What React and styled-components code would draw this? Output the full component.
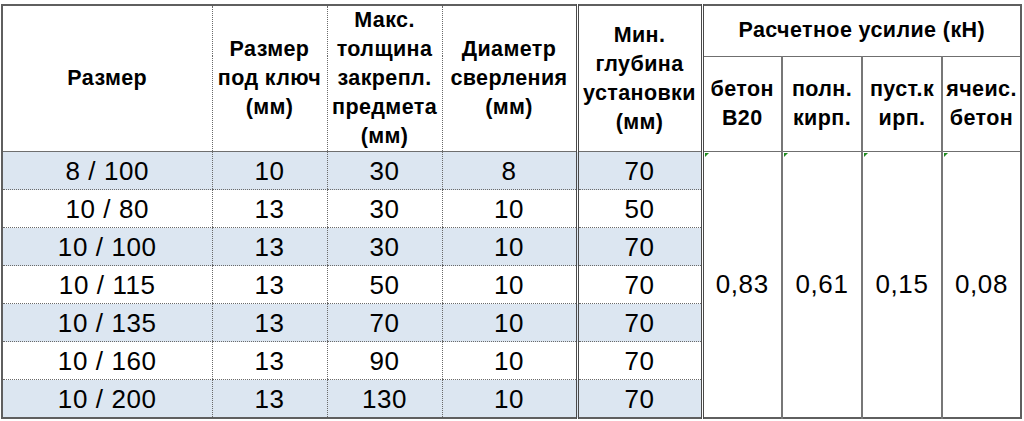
import React from "react";
import styled, { createGlobalStyle } from "styled-components";

const Global = createGlobalStyle`
  html, body {
    margin: 0;
    background: #fff;
  }
  body {
    font-family: "Liberation Sans", Arial, sans-serif;
    color: #000;
  }
`;

const Page = styled.div`
  padding: 4px 0 0 1px;
  width: 1024px;
  height: 421px;
  box-sizing: border-box;
  overflow: hidden;
`;

const Table = styled.table`
  border-collapse: collapse;
  table-layout: fixed;
  width: 1021px;
  border: 2px solid #5f5f5f;
`;

const Head = styled.th`
  font-weight: bold;
  font-size: 21.5px;
  letter-spacing: 0.4px;
  line-height: 29px;
  text-align: center;
  vertical-align: middle;
  padding: 0;
  height: ${(p) => p.$h || "auto"};
  border-left: ${(p) => p.$left || "1px dotted #6a6a6a"};
  border-bottom: 1px solid #6f6f6f;
  white-space: nowrap;
  overflow: hidden;
`;

const Row = styled.tr`
  background: ${(p) => (p.$shade ? "#dce6f1" : "#fff")};
`;

const Cell = styled.td`
  font-size: 26px;
  letter-spacing: 0.6px;
  text-align: center;
  vertical-align: middle;
  padding: 0;
  height: 37px;
  line-height: 36px;
  border-left: ${(p) => p.$left || "1px dotted #6a6a6a"};
  border-bottom: 1px dotted #6a6a6a;
`;

const Force = styled.td`
  position: relative;
  background: #fff;
  font-size: 26px;
  letter-spacing: 0.6px;
  text-align: center;
  vertical-align: middle;
  padding: 0;
  border-left: ${(p) => p.$left || "2px solid #777"};

  &::before {
    content: "";
    position: absolute;
    left: 1px;
    top: 1px;
    border-top: 4px solid #1f8a1f;
    border-right: 4px solid transparent;
  }
`;

const DOUBLE = "3px double #4a4a4a";
const GROUP = "2px solid #777";

const rows = [
  ["8 / 100", "10", "30", "8", "70"],
  ["10 / 80", "13", "30", "10", "50"],
  ["10 / 100", "13", "30", "10", "70"],
  ["10 / 115", "13", "50", "10", "70"],
  ["10 / 135", "13", "70", "10", "70"],
  ["10 / 160", "13", "90", "10", "70"],
  ["10 / 200", "13", "130", "10", "70"],
];

const forces = ["0,83", "0,61", "0,15", "0,08"];

export default function App() {
  return (
    <Page>
      <Global />
      <Table>
        <colgroup>
          <col style={{ width: 210 }} />
          <col style={{ width: 115 }} />
          <col style={{ width: 115 }} />
          <col style={{ width: 135 }} />
          <col style={{ width: 125 }} />
          <col style={{ width: 80 }} />
          <col style={{ width: 80 }} />
          <col style={{ width: 80 }} />
          <col style={{ width: 79 }} />
        </colgroup>
        <thead>
          <tr>
            <Head rowSpan={2} $left="none">Размер</Head>
            <Head rowSpan={2}>
              Размер<br />под ключ<br />(мм)
            </Head>
            <Head rowSpan={2}>
              Макс.<br />толщина<br />закрепл.<br />предмета<br />(мм)
            </Head>
            <Head rowSpan={2}>
              Диаметр<br />сверления<br />(мм)
            </Head>
            <Head rowSpan={2} $left={DOUBLE}>
              Мин.<br />глубина<br />установки<br />(мм)
            </Head>
            <Head colSpan={4} $left={DOUBLE} $h="49px">
              Расчетное усилие (кН)
            </Head>
          </tr>
          <tr>
            <Head $left={DOUBLE} $h="93px">бетон<br />B20</Head>
            <Head $left={GROUP}>полн.<br />кирп.</Head>
            <Head $left={GROUP}>пуст.к<br />ирп.</Head>
            <Head $left={GROUP}>ячеис.<br />бетон</Head>
          </tr>
        </thead>
        <tbody>
          {rows.map((r, i) => (
            <Row key={r[0]} $shade={i % 2 === 0}>
              <Cell $left="none">{r[0]}</Cell>
              <Cell>{r[1]}</Cell>
              <Cell>{r[2]}</Cell>
              <Cell>{r[3]}</Cell>
              <Cell $left={DOUBLE}>{r[4]}</Cell>
              {i === 0 &&
                forces.map((f, j) => (
                  <Force key={f} rowSpan={7} $left={j === 0 ? DOUBLE : GROUP}>
                    {f}
                  </Force>
                ))}
            </Row>
          ))}
        </tbody>
      </Table>
    </Page>
  );
}
